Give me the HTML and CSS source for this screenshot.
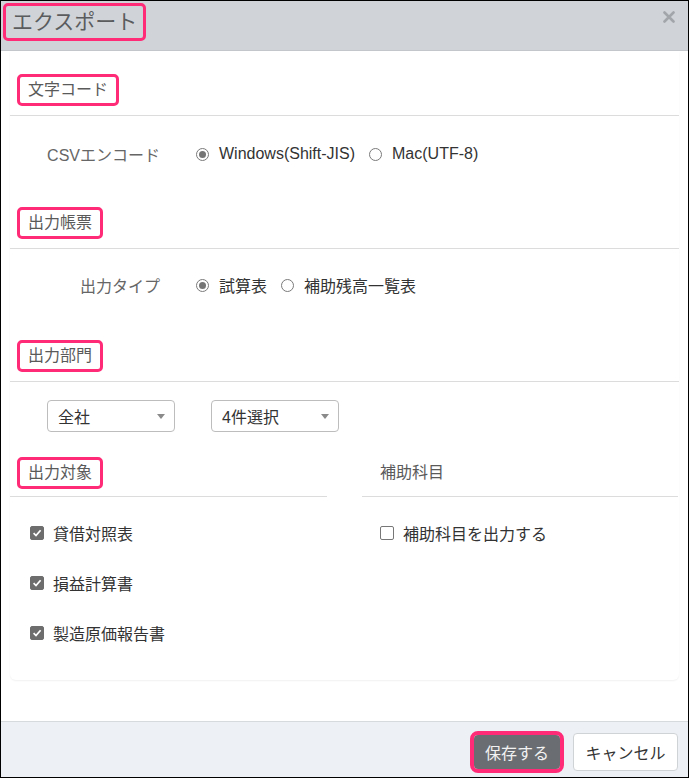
FILE: index.html
```html
<!DOCTYPE html>
<html lang="ja">
<head>
<meta charset="utf-8">
<title>エクスポート</title>
<link rel="stylesheet" href="styles.css">
</head>
<body>
<div class="modal">
  <header class="head">
    <span class="hl pink title">エクスポート</span>
    <span class="close" aria-label="close">
      <svg width="12" height="12" viewBox="0 0 12 12"><path d="M1.5 1.5 L10.5 10.5 M10.5 1.5 L1.5 10.5" stroke="#a2a6aa" stroke-width="2.6" stroke-linecap="round"/></svg>
    </span>
  </header>
  <main class="body">
    <div class="panel">
      <div class="sec-title"><span class="hl pink">文字コード</span></div>
      <div class="form-row">
        <div class="label">CSVエンコード</div>
        <label class="opt first"><span class="radio on"></span>Windows(Shift-JIS)</label>
        <label class="opt"><span class="radio"></span>Mac(UTF-8)</label>
      </div>

      <div class="sec-title"><span class="hl pink">出力帳票</span></div>
      <div class="form-row tight">
        <div class="label">出力タイプ</div>
        <label class="opt first"><span class="radio on"></span>試算表</label>
        <label class="opt"><span class="radio"></span>補助残高一覧表</label>
      </div>

      <div class="sec-title"><span class="hl pink">出力部門</span></div>
      <div class="selects">
        <div class="sel"><span>全社</span><span class="caret"></span></div>
        <div class="sel"><span>4件選択</span><span class="caret"></span></div>
      </div>

      <div class="cols">
        <div class="col">
          <div class="sec-title short"><span class="hl pink">出力対象</span></div>
          <div class="checks">
            <label class="chk"><span class="cb on"><svg width="10" height="10" viewBox="0 0 10 10"><path d="M1.6 5.2 L4 7.6 L8.6 2.2" fill="none" stroke="#fff" stroke-width="1.7"/></svg></span>貸借対照表</label>
            <label class="chk"><span class="cb on"><svg width="10" height="10" viewBox="0 0 10 10"><path d="M1.6 5.2 L4 7.6 L8.6 2.2" fill="none" stroke="#fff" stroke-width="1.7"/></svg></span>損益計算書</label>
            <label class="chk"><span class="cb on"><svg width="10" height="10" viewBox="0 0 10 10"><path d="M1.6 5.2 L4 7.6 L8.6 2.2" fill="none" stroke="#fff" stroke-width="1.7"/></svg></span>製造原価報告書</label>
          </div>
        </div>
        <div class="col">
          <div class="sec-title short"><span class="hl">補助科目</span></div>
          <div class="checks right">
            <label class="chk"><span class="cb"></span>補助科目を出力する</label>
          </div>
        </div>
      </div>
    </div>
  </main>
  <footer class="foot">
    <button class="btn save">保存する</button>
    <button class="btn cancel">キャンセル</button>
  </footer>
</div>
</body>
</html>
```

FILE: styles.css
```css
* { box-sizing: border-box; }

body {
  margin: 0;
  background: #fff;
  font-family: "Liberation Sans", "Noto Sans CJK JP", sans-serif;
}

.modal {
  width: 689px;
  height: 778px;
  border: 1px solid #000;
  display: flex;
  flex-direction: column;
  background: #fff;
}

.head {
  height: 50px;
  flex: none;
  background: #d0d4d8;
  border-bottom: 1px solid #c3c7cb;
  display: flex;
  align-items: flex-start;
  justify-content: space-between;
  padding: 2px 13px 0 2px;
}

.hl {
  display: inline-block;
  border: 3px solid transparent;
  border-radius: 5px;
  padding: 3px 8px;
  line-height: 20px;
}

.hl.pink { border-color: #ff2b77; }

.title {
  font-size: 21px;
  line-height: 26px;
  padding: 3px 6px;
  color: #5a5c5e;
}

.close {
  display: flex;
  margin-top: 8px;
}

.body {
  flex: 1;
  padding: 0 9px;
}

.panel {
  padding: 23px 0 32px;
  border-radius: 0 0 6px 6px;
  box-shadow: 0 1px 2px rgba(0, 0, 0, 0.06);
}

.sec-title {
  padding: 0 0 9px 7px;
  border-bottom: 1px solid #dcdcdc;
  font-size: 16px;
  color: #5a5a5a;
}

.sec-title.short { padding-bottom: 7px; }

.form-row {
  display: flex;
  align-items: center;
  height: 30px;
  margin: 23px 0 38px;
  font-size: 16px;
}

.form-row.tight { margin: 21px 0 40px; }

.label {
  width: 150px;
  text-align: right;
  color: #666;
}

.opt {
  display: inline-flex;
  align-items: center;
  gap: 10px;
  margin-right: 14px;
  color: #333;
}

.opt.first { margin-left: 36px; }

.radio {
  width: 13px;
  height: 13px;
  border: 1px solid #7a7a7a;
  border-radius: 50%;
  display: inline-flex;
  align-items: center;
  justify-content: center;
  background: #fff;
}

.radio.on::after {
  content: "";
  width: 7px;
  height: 7px;
  border-radius: 50%;
  background: #767676;
}

.selects {
  display: flex;
  gap: 36px;
  padding-left: 37px;
  margin-top: 18px;
}

.sel {
  width: 128px;
  height: 32px;
  border: 1px solid #bdbdbd;
  border-radius: 4px;
  display: flex;
  align-items: center;
  justify-content: space-between;
  padding: 0 9px 0 10px;
  font-size: 16px;
  color: #333;
}

.caret {
  width: 0;
  height: 0;
  border-left: 4px solid transparent;
  border-right: 4px solid transparent;
  border-top: 5px solid #8a8a8a;
}

.cols {
  display: grid;
  grid-template-columns: 317px 316px;
  column-gap: 35px;
  margin-top: 25px;
}

.checks {
  display: flex;
  flex-direction: column;
  gap: 20px;
  padding: 21px 0 0 20px;
}

.checks.right { padding-left: 18px; }

.chk {
  display: flex;
  align-items: center;
  gap: 9px;
  height: 30px;
  font-size: 16px;
  color: #333;
}

.cb {
  width: 14px;
  height: 14px;
  border-radius: 2px;
  border: 1px solid #777;
  display: inline-flex;
  align-items: center;
  justify-content: center;
  background: #fff;
}

.cb.on {
  background: #6d6d6d;
  border-color: #6d6d6d;
}

.foot {
  height: 56px;
  flex: none;
  background: #edf1f5;
  border-top: 1px solid #d6dadd;
  display: flex;
  align-items: center;
  justify-content: flex-end;
  gap: 13px;
  padding: 4px 10px 0 0;
}

.btn {
  font-family: "Liberation Sans", "Noto Sans CJK JP", sans-serif;
  font-size: 16px;
  border-radius: 4px;
  padding: 0;
}

.save {
  width: 86px;
  height: 34px;
  background: #6a6e72;
  color: #f2f2f2;
  border: none;
  outline: 4px solid #ff2b77;
  outline-offset: 0;
}

.cancel {
  width: 105px;
  height: 38px;
  background: #fff;
  color: #333;
  border: 1px solid #cfd3d6;
}
```
